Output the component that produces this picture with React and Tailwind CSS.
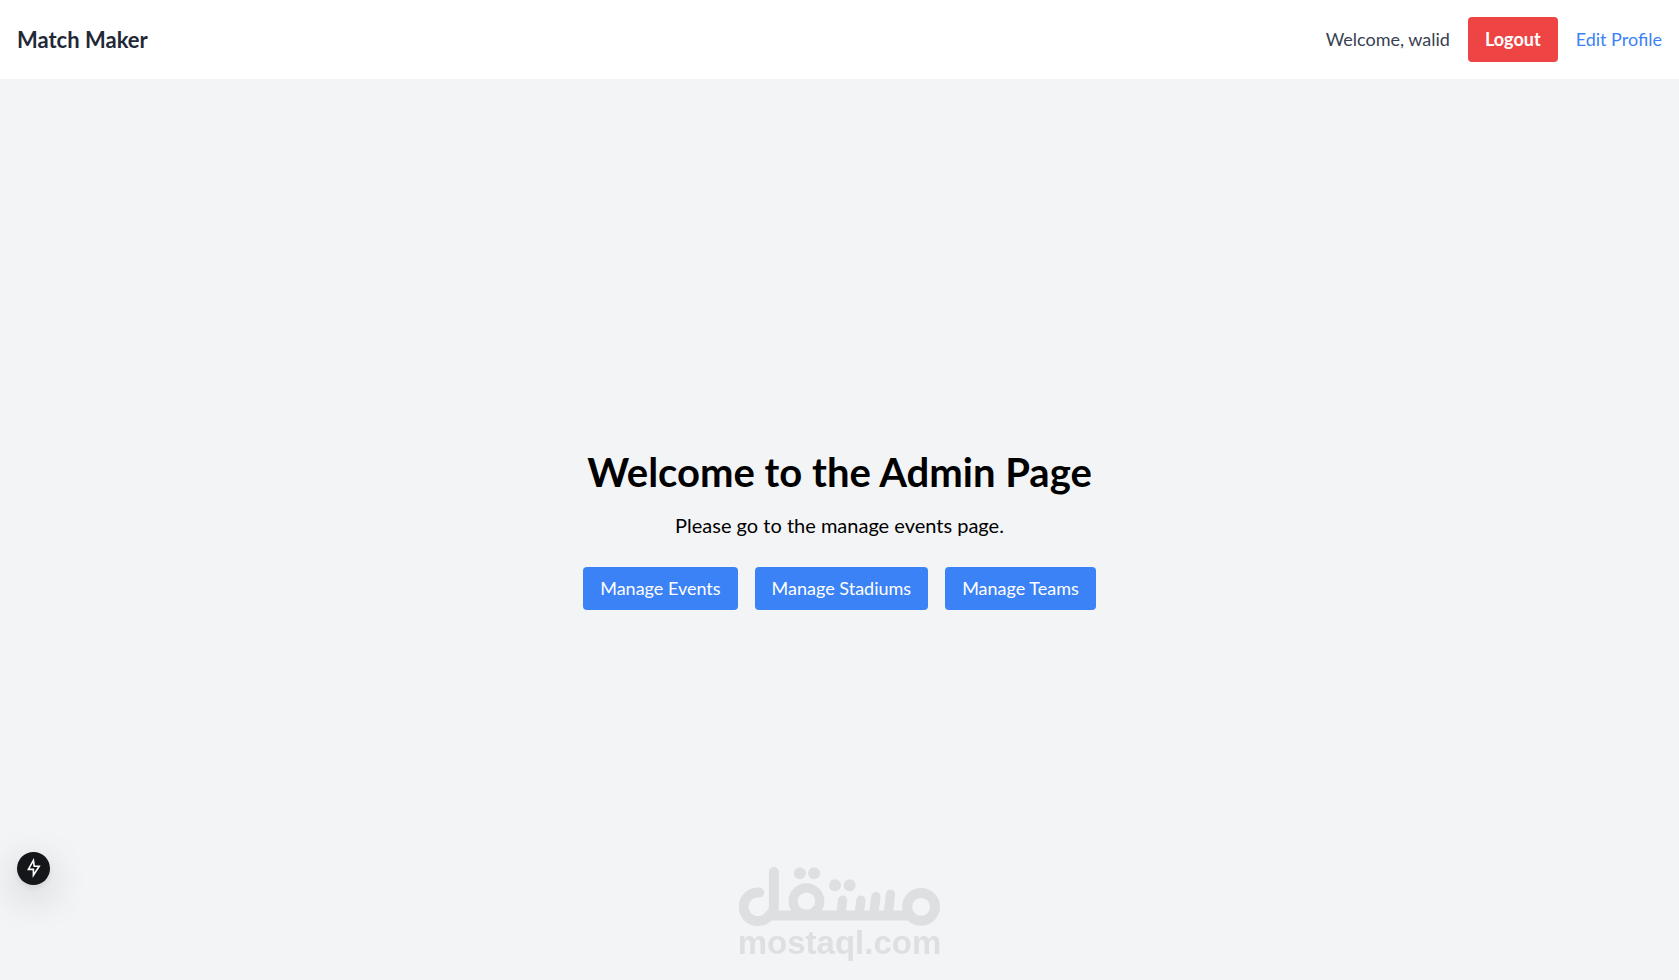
import { useState } from 'react'

const adminLinks = [
	{ label: 'Manage Events', href: '#events' },
	{ label: 'Manage Stadiums', href: '#stadiums' },
	{ label: 'Manage Teams', href: '#teams' },
]

export default function App() {
	const [user, setUser] = useState({ name: 'walid' })

	return (
		<div className="min-h-screen flex flex-col bg-gray-100 text-black text-[18px] leading-[27px] font-[Lato,sans-serif]">
			<Header user={user} onLogout={() => setUser(null)} />
			<main className="flex-1 flex flex-col items-center justify-center text-center">
				<h1 className="text-[40px] leading-[46px] font-bold">Welcome to the Admin Page</h1>
				<p className="mt-4 text-[20px] leading-[28px]">Please go to the manage events page.</p>
				<nav className="mt-7 flex gap-[17px]">
					{adminLinks.map(link => (
						<a key={link.href} href={link.href} className="px-[17px] py-2 rounded bg-[#3b82f6] text-white hover:bg-blue-700">{link.label}</a>
					))}
				</nav>
			</main>
			<DevIndicator />
			<Watermark />
		</div>
	)
}

function Header({ user, onLogout }) {
	return (
		<header className="p-[17px] flex items-center justify-between bg-white">
			<h2 className="text-[22px] leading-[30px] font-bold text-[#1f2937]">Match Maker</h2>
			<div className="flex items-center gap-[18px]">
				{user && <span className="text-[#374151]">Welcome, {user.name}</span>}
				<button type="button" onClick={onLogout} className="px-[17px] py-[9px] rounded bg-[#ef4444] text-white font-bold hover:bg-red-700">Logout</button>
				<a href="#profile" className="text-[#3b82f6]">Edit Profile</a>
			</div>
		</header>
	)
}

function DevIndicator() {
	return (
		<button type="button" aria-label="Static route" className="fixed left-[17px] bottom-[95px] size-[33px] rounded-full bg-[#15161a] flex items-center justify-center shadow-[0_12px_40px_rgba(0,0,0,0.2),0_3px_6px_rgba(0,0,0,0.08)]">
			<svg viewBox="0 0 33 33" className="size-[33px]" fill="none" stroke="white" strokeWidth="1.6" strokeLinejoin="miter">
				<path d="M16.4 8.4 11.4 17.4H16.4V23.2L22.2 14.2H17.2Z" />
			</svg>
		</button>
	)
}

function Watermark() {
	return (
		<div className="fixed inset-x-0 bottom-[22px] flex flex-col items-center pointer-events-none text-[#dedfe1]">
			<svg viewBox="54 48 608 184" className="w-[202px]" fill="none" stroke="currentColor" strokeWidth="30" strokeLinecap="round" aria-hidden="true">
				<path d="M115 128A43 43 0 1 0 145 197Q159 190 159 170V66" />
				<path d="M145 197H570" />
				<circle cx="257" cy="154" r="40" strokeWidth="28" />
				<circle cx="602" cy="171" r="42" />
				<path d="M366 151 360 195M421 151 415 195M466 140 459 195M510 133 503 195" strokeWidth="28" />
				<g fill="currentColor" stroke="none">
					<circle cx="237" cy="70" r="18" />
					<circle cx="280" cy="70" r="18" />
					<circle cx="343" cy="106" r="18" />
					<circle cx="387" cy="106" r="18" />
				</g>
			</svg>
			<span className="text-[33px] leading-[31px] font-bold font-['Liberation_Sans',sans-serif]">mostaql.com</span>
		</div>
	)
}
